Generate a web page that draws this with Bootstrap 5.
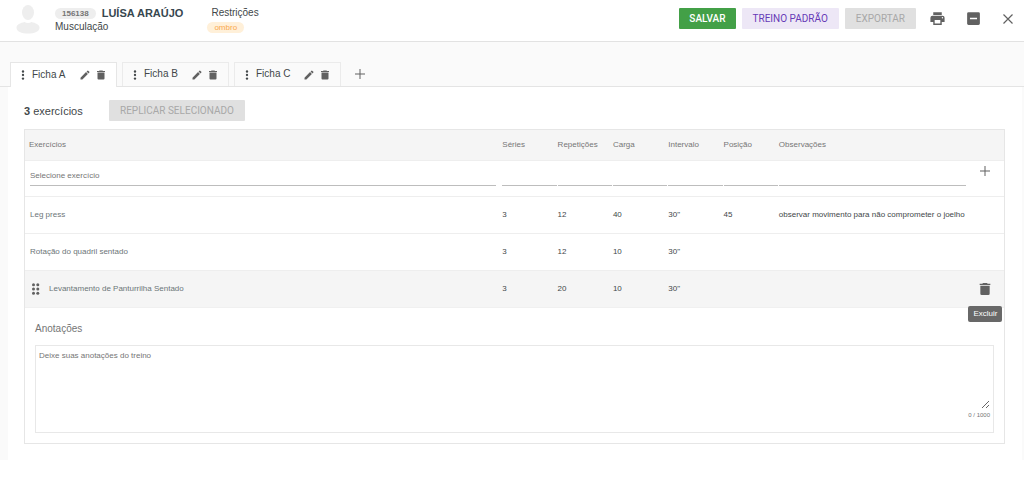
<!DOCTYPE html>
<html lang="pt-BR">
<head>
<meta charset="utf-8">
<meta name="viewport" content="width=device-width, initial-scale=1">
<title>Ficha de treino</title>
<link rel="stylesheet" href="https://cdn.jsdelivr.net/npm/bootstrap@5.3.0/dist/css/bootstrap.min.css">
<style>
  body { font-family: "Liberation Sans", Arial, sans-serif; font-size: 10px; line-height: 14px; color: #424749; background: #fff; }
  svg { display: block; fill: currentColor; }
  .icon-btn { border: 0; padding: 0; background: none; color: #616161; display: block; }
  .topbar { height: 42px; border-bottom: 1px solid #e2e2e2; padding: 0 9px 0 14px; }
  .avatar { color: #eee; margin-right: 14px; }
  .who { padding-top: 6px; }
  .who-line { gap: 6px; }
  .who-name { font-size: 11px; font-weight: 700; color: #37474f; margin: 0; line-height: 14px; }
  .pill { border-radius: 8px; font-size: 8px; line-height: 11px; padding: 0 7px; }
  .pill-id { background: #eee; color: #757575; font-weight: 700; }
  .pill-warn { background: #fff0d9; color: #f9a84d; }
  .restr { width: 60px; margin-left: 20px; }
  .act-row { gap: 6px; margin-right: 13px; }
  .act { font-family: Roboto, sans-serif; font-size: 10px; line-height: 13px; padding: 3px 10px; border: 1px solid transparent; border-radius: 1px; }
  .act-save { background: #43a047; color: #fff; font-weight: 500; padding: 3px 9px; }
  .act-std { background: #ede7f6; color: #673ab7; }
  .act:disabled { background: #e0e0e0; color: #a8a8a8; opacity: 1; border-color: transparent; }
  .tools { gap: 19px; }
  .workspace { background: #fafafa; padding-top: 20px; }
  .sheet-tabs { padding-left: 10px; gap: 5px; border-bottom: 1px solid #e4e4e4; }
  .sheet-tab { width: 107px; height: 24px; border: 1px solid #ebebeb; border-bottom: 0; padding: 0 9px 0 7px; }
  .sheet-tab.current { background: #fff; margin-bottom: -1px; height: 25px; border-color: #e6e6e6; }
  .sheet-tab .label-btn { border: 0; background: none; padding: 0 0 1px; color: #424749; }
  .panel { background: #fff; margin: 0 2px 0 8px; padding: 13px 17px 16px 16px; }
  .total { font-size: 11px; width: 85px; }
  .sheet { border: 1px solid #e6e6e6; }
  .ex-table { table-layout: fixed; width: 100%; font-size: 8px; line-height: 12px; color: #424749; }
  .ex-table th { background: #f5f5f5; color: #757575; font-weight: 400; height: 30px; padding: 0; }
  .ex-table td { height: 37px; padding: 0; border-top: 1px solid #eee; }
  .ex-table th:first-child { padding-left: 4px; }
  .ex-table td:first-child { padding: 0 6px 0 5px; color: #6c7578; }
  .ex-table .hovered td { background: #f5f5f5; }
  .ex-table .entry td { height: 36px; vertical-align: top; }
  .entry input { display: block; width: 100%; border: 0; border-bottom: 1px solid #bdbdbd; border-radius: 0; background: none; padding: 0 0 2px; height: 18px; margin-top: 7px; font-size: 8px; outline: 0; }
  .entry td + td { padding-right: 1px; }
  .entry input::placeholder, .notes textarea::placeholder { color: #757575; opacity: 1; }
  .col-n { width: 5.65%; }
  .col-obs { width: 19.2%; }
  .col-act { width: 3.8%; }
  .grip { margin: 0 9px 0 1px; color: #616161; }
  .tip { position: absolute; top: 35px; left: 50%; transform: translateX(-50%); background: #686868; color: #fff; border-radius: 2px; padding: 2px 5px; font-size: 8px; z-index: 2; }
  .notes { padding: 14px 10px 10px; border-top: 1px solid #f0f0f0; }
  .notes label { color: #757575; line-height: 14px; margin-bottom: 9px; display: block; }
  .notes-box { border: 1px solid #e8e8e8; padding: 4px 3px 10px; }
  .notes textarea { display: block; width: 100%; height: 59px; border: 0; padding: 0; outline: 0; font-size: 8px; line-height: 12px; resize: vertical; background: none; }
  .count { font-size: 6px; line-height: 13px; color: #757575; text-align: right; }
</style>
</head>
<body>
<svg class="d-none" aria-hidden="true">
  <symbol id="i-dots" viewBox="0 0 24 24"><circle cx="12" cy="3.500" r="2.800"/><circle cx="12" cy="12" r="2.800"/><circle cx="12" cy="20.500" r="2.800"/></symbol>
  <symbol id="i-pen" viewBox="0 0 24 24"><path d="M3 17.250V21h3.750L17.810 9.940l-3.750-3.750L3 17.250zM20.710 7.040a1 1 0 0 0 0-1.410l-2.340-2.340a1 1 0 0 0-1.410 0l-1.830 1.830 3.750 3.750 1.830-1.830z"/></symbol>
  <symbol id="i-bin" viewBox="0 0 24 24"><path d="M5 19a2 2 0 0 0 2 2h10a2 2 0 0 0 2-2V7H5v12zM20 4h-4l-1-1H9L8 4H4v2h16V4z"/></symbol>
  <symbol id="i-plus" viewBox="0 0 12 12"><path d="M5.500 1h1v4.500H11v1H6.500V11h-1V6.500H1v-1h4.500z"/></symbol>
</svg>

<header class="topbar d-flex align-items-start">
  <svg class="avatar" width="27" height="36" viewBox="0 0 27 36" aria-hidden="true"><ellipse cx="14" cy="12.500" rx="6" ry="7.500"/><path d="M2.500 27.500c0-3 4-4.500 8-5.500 2 1.300 5 1.300 7 0 4 1 8 2.500 8 5.500 0 4-5 6-11.500 6s-11.500-2-11.500-6z"/></svg>
  <div class="who">
    <div class="who-line d-flex align-items-center"><span class="pill pill-id">156138</span><h1 class="who-name">LUÍSA ARAÚJO</h1></div>
    <div>Musculação</div>
  </div>
  <div class="who restr">
    <div class="ps-2">Restrições</div>
    <div class="ps-1"><span class="pill pill-warn d-inline-block">ombro</span></div>
  </div>
  <div class="d-flex ms-auto pt-2 align-items-center">
    <div class="act-row d-flex">
      <button class="btn act act-save" type="button">SALVAR</button>
      <button class="btn act act-std" type="button">TREINO PADRÃO</button>
      <button class="btn act" type="button" disabled>EXPORTAR</button>
    </div>
    <div class="tools d-flex align-items-center">
      <button class="icon-btn" type="button" aria-label="Imprimir"><svg width="17" height="17" viewBox="0 0 24 24"><path d="M19 8H5a3 3 0 0 0-3 3v6h4v4h12v-4h4v-6a3 3 0 0 0-3-3zm-3 11H8v-5h8v5zm3-7a1 1 0 1 1 0-2 1 1 0 0 1 0 2zM18 3H6v4h12V3z"/></svg></button>
      <button class="icon-btn" type="button" aria-label="Minimizar"><svg width="17" height="17" viewBox="0 0 24 24"><path d="M19 3H5a2 2 0 0 0-2 2v14c0 1.100.9 2 2 2h14a2 2 0 0 0 2-2V5a2 2 0 0 0-2-2zm-2 10H7v-2h10v2z"/></svg></button>
      <button class="icon-btn" type="button" aria-label="Fechar"><svg width="14" height="14" viewBox="0 0 14 14" stroke="currentColor" stroke-width="1.200"><path d="M2.500 2.500l9 9M11.500 2.500l-9 9"/></svg></button>
    </div>
  </div>
</header>

<main class="workspace">
  <nav class="sheet-tabs d-flex align-items-end" aria-label="Fichas">
    <div class="sheet-tab current d-flex align-items-center">
      <svg width="10" height="10"><use href="#i-dots"/></svg><button class="label-btn ms-1" type="button">Ficha A</button>
      <button class="icon-btn ms-auto" type="button" aria-label="Editar Ficha A"><svg width="12" height="12"><use href="#i-pen"/></svg></button>
      <button class="icon-btn ms-1" type="button" aria-label="Excluir Ficha A"><svg width="12" height="12"><use href="#i-bin"/></svg></button>
    </div>
    <div class="sheet-tab d-flex align-items-center">
      <svg width="10" height="10"><use href="#i-dots"/></svg><button class="label-btn ms-1" type="button">Ficha B</button>
      <button class="icon-btn ms-auto" type="button" aria-label="Editar Ficha B"><svg width="12" height="12"><use href="#i-pen"/></svg></button>
      <button class="icon-btn ms-1" type="button" aria-label="Excluir Ficha B"><svg width="12" height="12"><use href="#i-bin"/></svg></button>
    </div>
    <div class="sheet-tab d-flex align-items-center">
      <svg width="10" height="10"><use href="#i-dots"/></svg><button class="label-btn ms-1" type="button">Ficha C</button>
      <button class="icon-btn ms-auto" type="button" aria-label="Editar Ficha C"><svg width="12" height="12"><use href="#i-pen"/></svg></button>
      <button class="icon-btn ms-1" type="button" aria-label="Excluir Ficha C"><svg width="12" height="12"><use href="#i-bin"/></svg></button>
    </div>
    <button class="icon-btn align-self-center ms-2" type="button" aria-label="Nova ficha"><svg width="12" height="12"><use href="#i-plus"/></svg></button>
  </nav>

  <section class="panel">
    <div class="d-flex align-items-center mb-2">
      <div class="total"><strong>3</strong> exercícios</div>
      <button class="btn act" type="button" disabled>REPLICAR SELECIONADO</button>
    </div>
    <div class="sheet">
      <table class="ex-table">
        <colgroup><col><col class="col-n"><col class="col-n"><col class="col-n"><col class="col-n"><col class="col-n"><col class="col-obs"><col class="col-act"></colgroup>
        <thead><tr><th>Exercícios</th><th>Séries</th><th>Repetições</th><th>Carga</th><th>Intervalo</th><th>Posição</th><th>Observações</th><th></th></tr></thead>
        <tbody>
          <tr class="entry">
            <td><input type="text" placeholder="Selecione exercício" aria-label="Exercício"></td>
            <td><input type="text" aria-label="Séries"></td><td><input type="text" aria-label="Repetições"></td><td><input type="text" aria-label="Carga"></td><td><input type="text" aria-label="Intervalo"></td><td><input type="text" aria-label="Posição"></td><td><input type="text" aria-label="Observações"></td>
            <td><button class="icon-btn mx-auto mt-1" type="button" aria-label="Adicionar"><svg width="12" height="12"><use href="#i-plus"/></svg></button></td>
          </tr>
          <tr><td>Leg press</td><td>3</td><td>12</td><td>40</td><td>30"</td><td>45</td><td class="text-nowrap">observar movimento para não comprometer o joelho</td><td></td></tr>
          <tr><td>Rotação do quadril sentado</td><td>3</td><td>12</td><td>10</td><td>30"</td><td></td><td></td><td></td></tr>
          <tr class="hovered">
            <td><div class="d-flex align-items-center"><svg class="grip" width="9" height="12" viewBox="0 0 9 12"><circle cx="2.500" cy="1.800" r="1.500"/><circle cx="6.800" cy="1.800" r="1.500"/><circle cx="2.500" cy="6" r="1.500"/><circle cx="6.800" cy="6" r="1.500"/><circle cx="2.500" cy="10.200" r="1.500"/><circle cx="6.800" cy="10.200" r="1.500"/></svg>Levantamento de Panturrilha Sentado</div></td>
            <td>3</td><td>20</td><td>10</td><td>30"</td><td></td><td></td>
            <td class="position-relative"><button class="icon-btn mx-auto" type="button" aria-label="Excluir"><svg width="16" height="16"><use href="#i-bin"/></svg></button><span class="tip" role="tooltip">Excluir</span></td>
          </tr>
        </tbody>
      </table>
      <div class="notes">
        <label for="notes">Anotações</label>
        <div class="notes-box">
          <textarea id="notes" maxlength="1000" placeholder="Deixe suas anotações do treino"></textarea>
          <div class="count">0 / 1000</div>
        </div>
      </div>
    </div>
  </section>
</main>
<script src="https://cdn.jsdelivr.net/npm/bootstrap@5.3.0/dist/js/bootstrap.bundle.min.js"></script>
</body>
</html>
